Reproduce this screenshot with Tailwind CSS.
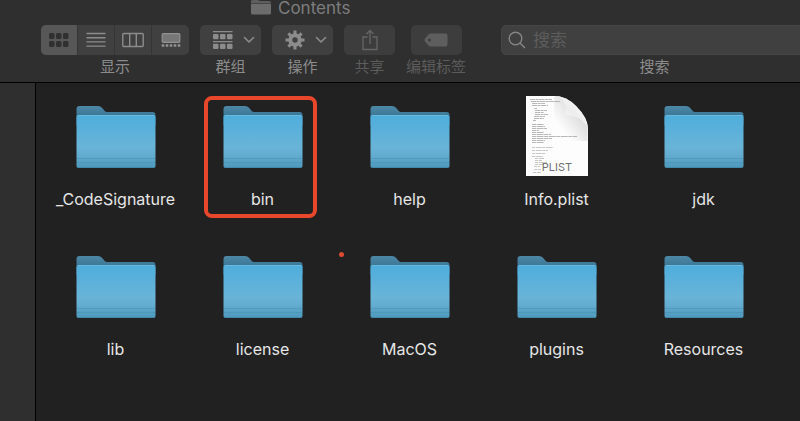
<!DOCTYPE html>
<html lang="zh-CN">
<head>
  <meta charset="UTF-8">
  <meta name="viewport" content="width=device-width, initial-scale=1.0">
  <title>Contents</title>
  <script src="https://cdn.jsdelivr.net/npm/@tailwindcss/browser@4"></script>
</head>
<body class="flex h-screen flex-col overflow-hidden bg-[#212121] font-['Inter','Noto_Sans_CJK_SC',sans-serif] text-[#8c8c8c]">
  <!-- shared icons -->
  <svg class="absolute size-0" aria-hidden="true">
    <defs>
      <linearGradient id="front" x1="0" y1="0" x2="0" y2="1">
        <stop offset="0" stop-color="#50acd9"/>
        <stop offset="0.15" stop-color="#54afdb"/>
        <stop offset="0.6" stop-color="#69b4d8"/>
        <stop offset="0.75" stop-color="#64add0"/>
        <stop offset="1" stop-color="#4d98bc"/>
      </linearGradient>
      <linearGradient id="back" x1="0" y1="0" x2="0" y2="1">
        <stop offset="0" stop-color="#4e88a7"/>
        <stop offset="0.5" stop-color="#3d7796"/>
      </linearGradient>
      <linearGradient id="curl" x1="0" y1="1" x2="1" y2="0">
        <stop offset="0.2" stop-color="#ffffff"/>
        <stop offset="0.5" stop-color="#ececec"/>
        <stop offset="0.8" stop-color="#fafafa"/>
      </linearGradient>
      <linearGradient id="shade" x1="0.1" y1="0.9" x2="0.6" y2="0.4">
        <stop offset="0.3" stop-color="#fdfdfd"/>
        <stop offset="1" stop-color="#e2e2e2"/>
      </linearGradient>
      <symbol id="folder" viewBox="0 0 80 64">
        <path d="M.5 14V4Q.5 1 3.500 1H22q2.500 0 4 1.800l2.500 3Q29.500 7 31 7H76.500q3 0 3 3V20H.5Z" fill="url(#back)"/>
        <rect x=".5" y="10" width="79" height="53" rx="2" fill="url(#front)"/>
        <path d="M2 10.500H78" stroke="#74c0e3" stroke-opacity=".7"/>
        <path d="M1 53.500H79M1 57.500H79" stroke="#438daf" stroke-opacity=".45"/>
        <path d="M2 62.500H78" stroke="#3d81a1" stroke-opacity=".7"/>
      </symbol>
      <symbol id="chevron" viewBox="0 0 12 8">
        <path d="M1.500 1.500 6 6l4.500-4.500" fill="none" stroke="currentColor" stroke-width="1.600" stroke-linecap="round" stroke-linejoin="round"/>
      </symbol>
    </defs>
  </svg>

  <header class="shrink-0 border-b border-black bg-[#2f2f2f] pb-[5px]">
    <h1 class="flex h-4 items-center gap-[7px] pl-[251px] text-[17px] leading-4 text-[#7d7d7d]">
      <svg class="h-4 w-5" viewBox="0 0 20 16"><path d="M0 1Q0 0 2 0H7l2 1h9q2 0 2 2v.5H0Z" fill="#5e5e5e"/><path d="M0 4H20V13q0 1.500-1.500 1.500h-17Q0 14.500 0 13Z" fill="#6c6c6c"/></svg>
      Contents
    </h1>

    <div class="-mr-2 mt-[9px] flex gap-[11px] pl-[41px] text-[15px] leading-5">
      <div class="flex w-[148px] flex-col items-center gap-0.5">
        <div role="group" aria-labelledby="view-label" class="grid h-[30px] w-full grid-cols-4 divide-x divide-[#353535] overflow-hidden rounded-[5px] bg-[#404040]">
          <button aria-label="图标" aria-pressed="true" class="flex items-center justify-center bg-[#575757]">
            <svg class="h-4 w-5" viewBox="0 0 20 16" fill="#303030"><rect x="0" y="1" width="5.500" height="6" rx="1.500"/><rect x="7" y="1" width="5.500" height="6" rx="1.500"/><rect x="14" y="1" width="5.500" height="6" rx="1.500"/><rect x="0" y="9" width="5.500" height="6" rx="1.500"/><rect x="7" y="9" width="5.500" height="6" rx="1.500"/><rect x="14" y="9" width="5.500" height="6" rx="1.500"/></svg>
          </button>
          <button aria-label="列表" class="flex items-center justify-center">
            <svg class="h-4 w-5" viewBox="0 0 20 16"><path d="M.5 1.500h19M.5 5.700h19M.5 9.900h19M.5 14.100h19" stroke="currentColor" stroke-width="1.400"/></svg>
          </button>
          <button aria-label="分栏" class="flex items-center justify-center">
            <svg class="h-4 w-[22px]" viewBox="0 0 22 16" fill="none" stroke="currentColor" stroke-width="1.400"><rect x=".8" y="1.500" width="20.400" height="13" rx="1"/><path d="M7.700 2v12M14.300 2v12"/></svg>
          </button>
          <button aria-label="画廊" class="flex items-center justify-center">
            <svg class="h-4 w-5" viewBox="0 0 20 16"><rect x="1.200" y="1.700" width="17.600" height="8.600" rx="1" fill="#777777" stroke="#929292" stroke-width="1.200"/><path d="M.7 13.500h18.800" stroke="#929292" stroke-width="2.600" stroke-dasharray="2.600 1.400"/></svg>
          </button>
        </div>
        <span id="view-label">显示</span>
      </div>

      <div class="flex w-[61px] flex-col items-center gap-0.5">
        <button aria-labelledby="group-label" class="flex h-[30px] w-full items-center justify-between rounded-[5px] bg-[#404040] pl-[13px] pr-1.5">
          <svg class="h-[18px] w-5" viewBox="0 0 20 18" fill="currentColor"><path d="M0 0h19.500v1.300H0ZM0 10h19.500v1.300H0Z"/><rect x="0" y="3" width="5.500" height="5.300" rx="1"/><rect x="7" y="3" width="5.500" height="5.300" rx="1"/><rect x="14" y="3" width="5.500" height="5.300" rx="1"/><rect x="0" y="12.700" width="5.500" height="5.300" rx="1"/><rect x="7" y="12.700" width="5.500" height="5.300" rx="1"/><rect x="14" y="12.700" width="5.500" height="5.300" rx="1"/></svg>
          <svg class="h-2 w-3"><use href="#chevron"/></svg>
        </button>
        <span id="group-label">群组</span>
      </div>

      <div class="flex w-[61px] flex-col items-center gap-0.5">
        <button aria-labelledby="action-label" class="flex h-[30px] w-full items-center justify-between rounded-[5px] bg-[#404040] pl-[13px] pr-1.5">
          <svg class="h-5 w-5" viewBox="-10 -10 20 20" stroke="currentColor" fill="none">
            <circle r="4.700" stroke-width="4"/>
            <path d="M0-6V-9.500M0 6V9.500M-6 0H-9.500M6 0H9.500M-4.250-4.250-6.600-6.600M4.250 4.250 6.600 6.600M-4.250 4.250-6.600 6.600M4.250-4.250 6.600-6.600" stroke-width="3"/>
          </svg>
          <svg class="h-2 w-3"><use href="#chevron"/></svg>
        </button>
        <span id="action-label">操作</span>
      </div>

      <div class="flex w-[51px] flex-col items-center gap-0.5 text-[#5c5c5c]">
        <button disabled aria-labelledby="share-label" class="flex h-[30px] w-full items-center justify-center rounded-[5px] bg-[#3d3d3d]">
          <svg class="h-[22px] w-4" viewBox="0 0 16 22" fill="none" stroke="#666666" stroke-width="1.300"><path d="M5.500 8H1V20.500H15V8H10.500M8 15V1.500M4.500 5 8 1.500 11.500 5"/></svg>
        </button>
        <span id="share-label">共享</span>
      </div>

      <div class="flex w-[60px] flex-col items-center gap-0.5 text-[#5c5c5c]">
        <button disabled aria-labelledby="tag-label" class="flex h-[30px] w-[51px] items-center justify-center rounded-[5px] bg-[#3d3d3d]">
          <svg class="h-3.5 w-6" viewBox="0 0 24 14"><path d="M7 .5H21.500q2 0 2 2v9q0 2-2 2H7Q5.500 13.500 4.500 12.500L1 8.500Q0 7 1 5.500L4.500 1.500Q5.500.5 7 .5Z" fill="#5e5e5e"/><circle cx="5.500" cy="7" r="1.500" fill="#3d3d3d"/></svg>
        </button>
        <span id="tag-label">编辑标签</span>
      </div>

      <div class="ml-6 flex flex-1 flex-col items-center gap-0.5">
        <div class="flex h-[30px] w-full items-center gap-[7px] rounded-[5px] border border-[#464646] bg-[#404040] pl-1.5">
          <svg class="h-[18px] w-[18px] shrink-0" viewBox="0 0 18 18" fill="none" stroke="#858585" stroke-width="1.400"><circle cx="7.500" cy="7.500" r="6.300"/><path d="m12 12 5 5"/></svg>
          <input id="search" type="search" placeholder="搜索" class="min-w-0 flex-1 text-[17px] leading-6 outline-none placeholder:text-[#5c5c5c]">
        </div>
        <label for="search">搜索</label>
      </div>
    </div>
  </header>

  <div class="flex min-h-0 flex-1">
    <aside class="w-9 shrink-0 border-r border-black bg-[#2f2f2f]"></aside>

    <main class="relative flex-1 pl-1.5 pr-[23px] pt-3">
      <ul class="grid auto-rows-[150px] grid-cols-5 text-center text-[16px] leading-6 text-[#e6e6e6]">
        <li class="flex flex-col items-center">
          <svg class="mb-[7px] mt-2.5 h-16 w-20 shrink-0"><use href="#folder"/></svg>
          <span class="mt-[11px]">_CodeSignature</span>
        </li>
        <li class="relative flex flex-col items-center">
          <svg class="mb-[7px] mt-2.5 h-16 w-20 shrink-0"><use href="#folder"/></svg>
          <span class="mt-[11px]">bin</span>
          <!-- highlight -->
          <div class="absolute left-[15px] top-px h-[122px] w-[113px] rounded-lg border-4 border-[#e8472b]"></div>
        </li>
        <li class="flex flex-col items-center">
          <svg class="mb-[7px] mt-2.5 h-16 w-20 shrink-0"><use href="#folder"/></svg>
          <span class="mt-[11px]">help</span>
        </li>
        <li class="flex flex-col items-center">
          <svg class="h-[81px] w-[62px] shrink-0" viewBox="0 0 62 81">
            <path d="M0 1H29Q40 1 50 11Q62 23 62 34V81H0Z" fill="#fdfdfd"/>
            <path d="M34 1.500Q41 7 41 20Q54 20 61.500 31V46H28V1.500Z" fill="url(#shade)"/>
            <path d="M29 1Q40 1 50 11Q62 23 62 34Q57 20 40 20Q41 4 29 1Z" fill="url(#curl)"/>
            <g stroke="#777777" stroke-width=".8" stroke-opacity=".65" fill="none">
              <path d="M4 4.500h22M5 6.500h29M6 8.500h13M6 10.500h16M8 13.500h3M9 15.500h12M9 17.500h9M9 19.500h13M8 21.500h11M8 23.500h10M7 25.500h3" stroke-dasharray="5 .6 3 .5"/>
              <path d="M6 29.500h12M6 31.500h13M6 33.500h15M6 35.500h7M6 37.500h12M6 39.500h19M6 41.500h45M6 43.500h20M6 45.500h13M6 47.500h12" stroke-dasharray="4 .6 7 .5"/>
              <path d="M6 52.500h21M6 55.500h16M6 58.500h14M6 61.500h11M9 63.500h9M9 65.500h7M9 67.500h12M9 69.500h9M8 71.500h6M8 74.500h7M7 77.500h8" stroke-dasharray="3 .7 6 .5" stroke-opacity=".5"/>
            </g>
            <text x="31" y="76" text-anchor="middle" font-size="11" fill="#707070">PLIST</text>
          </svg>
          <span class="mt-[11px]">Info.plist</span>
        </li>
        <li class="flex flex-col items-center">
          <svg class="mb-[7px] mt-2.5 h-16 w-20 shrink-0"><use href="#folder"/></svg>
          <span class="mt-[11px]">jdk</span>
        </li>
        <li class="flex flex-col items-center">
          <svg class="mb-[7px] mt-2.5 h-16 w-20 shrink-0"><use href="#folder"/></svg>
          <span class="mt-[11px]">lib</span>
        </li>
        <li class="flex flex-col items-center">
          <svg class="mb-[7px] mt-2.5 h-16 w-20 shrink-0"><use href="#folder"/></svg>
          <span class="mt-[11px]">license</span>
        </li>
        <li class="flex flex-col items-center">
          <svg class="mb-[7px] mt-2.5 h-16 w-20 shrink-0"><use href="#folder"/></svg>
          <span class="mt-[11px]">MacOS</span>
        </li>
        <li class="flex flex-col items-center">
          <svg class="mb-[7px] mt-2.5 h-16 w-20 shrink-0"><use href="#folder"/></svg>
          <span class="mt-[11px]">plugins</span>
        </li>
        <li class="flex flex-col items-center">
          <svg class="mb-[7px] mt-2.5 h-16 w-20 shrink-0"><use href="#folder"/></svg>
          <span class="mt-[11px]">Resources</span>
        </li>
      </ul>
      <div class="absolute left-[303px] top-[169px] size-[5px] rounded-full bg-[#dd4b30]"></div>
    </main>
  </div>
</body>
</html>
